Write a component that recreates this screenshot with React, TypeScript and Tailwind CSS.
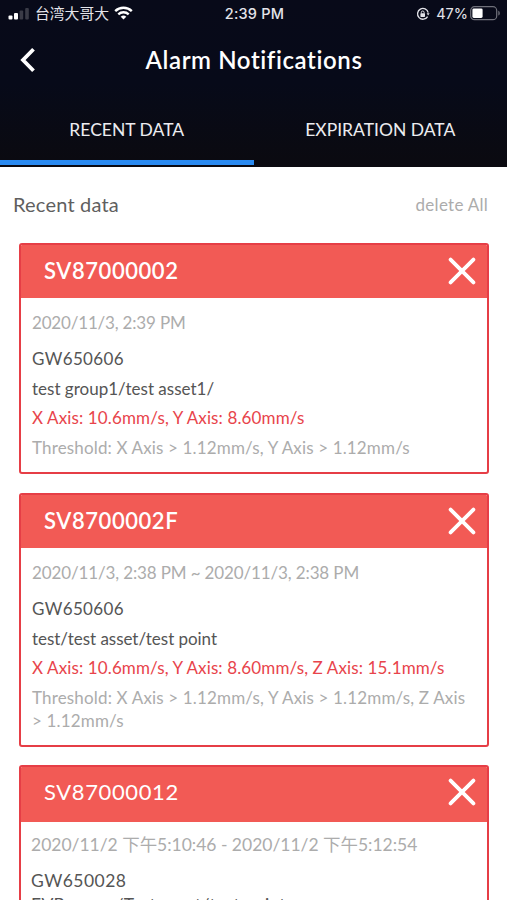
import { useState } from 'react';
import clsx from 'clsx';

interface AlarmLine {
  text: string;
  className: string;
}

interface Alarm {
  id: string;
  titleClass: string;
  headerClass: string;
  bodyClass: string;
  lines: AlarmLine[];
}

const alarms: Alarm[] = [
  {
    id: 'SV87000002',
    titleClass: 'font-semibold tracking-[0.56px]',
    headerClass: 'h-[53px] pb-[2px]',
    bodyClass: 'h-[174px] pt-[13px] pl-[11px] text-[17px]',
    lines: [
      { text: '2020/11/3, 2:39 PM', className: 'mb-[13px] text-[#acacac] tracking-[-0.18px]' },
      { text: 'GW650606', className: 'mb-[7px] text-[#555] tracking-[0.36px]' },
      { text: 'test group1/test asset1/', className: 'mb-[6px] text-[#555]' },
      { text: 'X Axis: 10.6mm/s, Y Axis: 8.60mm/s', className: 'mb-[7px] text-[#e8444b] tracking-[0.13px]' },
      { text: 'Threshold: X Axis > 1.12mm/s, Y Axis > 1.12mm/s', className: 'text-[#acacac] tracking-[0.15px]' },
    ],
  },
  {
    id: 'SV8700002F',
    titleClass: 'font-semibold tracking-[0.56px]',
    headerClass: 'h-[53px]',
    bodyClass: 'h-[197px] pt-[13px] pl-[11px] text-[17px]',
    lines: [
      { text: '2020/11/3, 2:38 PM ~ 2020/11/3, 2:38 PM', className: 'mb-[13px] text-[#acacac] tracking-[-0.13px]' },
      { text: 'GW650606', className: 'mb-[7px] text-[#555] tracking-[0.36px]' },
      { text: 'test/test asset/test point', className: 'mb-[6px] text-[#555] tracking-[-0.04px]' },
      {
        text: 'X Axis: 10.6mm/s, Y Axis: 8.60mm/s, Z Axis: 15.1mm/s',
        className: 'mb-[7px] text-[#e8444b] tracking-[0.12px]',
      },
      {
        text: 'Threshold: X Axis > 1.12mm/s, Y Axis > 1.12mm/s, Z Axis > 1.12mm/s',
        className: 'text-[#acacac] tracking-[0.16px]',
      },
    ],
  },
  {
    id: 'SV87000012',
    titleClass: 'font-normal tracking-[0.62px]',
    headerClass: 'h-[55px] pb-[5px]',
    bodyClass: 'h-[200px] pt-[11px] pl-[10px] text-[17.5px]',
    lines: [
      { text: '2020/11/2 下午5:10:46 - 2020/11/2 下午5:12:54', className: 'mb-[13px] text-[#acacac] tracking-[-0.02px]' },
      { text: 'GW650028', className: 'mb-px text-[#555] tracking-[0.45px]' },
      { text: 'EVB group/Test asset/test point', className: 'text-[#555] tracking-[0.27px]' },
    ],
  },
];

function StatusBar() {
  return (
    <div className="flex h-7 items-center justify-between pr-[6px] pl-[8px] font-['Inter','Noto_Sans_CJK_TC',sans-serif] text-[14.5px] leading-7 text-[#e4e4ea]">
      <div className="flex w-[200px] items-center">
        <svg width="22" height="14" viewBox="0 0 22 14" className="mr-[5px] shrink-0">
          <rect x="0.5" y="8.5" width="4" height="4" rx="1" fill="#fff" />
          <rect x="6" y="6" width="4" height="6.5" rx="1" fill="#fff" />
          <rect x="11.6" y="3.5" width="3.6" height="9" rx="1" fill="#3a3b47" />
          <rect x="17.2" y="1" width="3.6" height="11.5" rx="1" fill="#3a3b47" />
        </svg>
        <span className="text-[14.8px]">台湾大哥大</span>
        <svg width="19" height="14" viewBox="0 0 19 14" className="mb-[2px] ml-[5px] shrink-0" fill="none" stroke="#fff">
          <path d="M1.2 5.2a11.8 11.8 0 0 1 16.6 0" strokeWidth="2.4" />
          <path d="M4.3 8.4a7.4 7.4 0 0 1 10.4 0" strokeWidth="2.3" />
          <path d="M9.5 13.6 6.7 10.8a4 4 0 0 1 5.6 0z" fill="#fff" stroke="none" />
        </svg>
      </div>
      <span className="font-medium tracking-[0.2px]">2:39 PM</span>
      <div className="flex w-[200px] items-center justify-end">
        <svg width="14" height="14" viewBox="0 0 14 14" className="mr-[6px]" fill="none" stroke="#e4e4ea">
          <path d="M11.6 9.6A5.4 5.4 0 1 1 12.2 5.6" strokeWidth="1.3" />
          <path d="M10.6 6.2h3l-1.5 2.2z" fill="#e4e4ea" stroke="none" />
          <rect x="4.4" y="6.3" width="4.6" height="3.6" rx="0.6" fill="#e4e4ea" stroke="none" />
          <path d="M5.3 6.5V5.4a1.4 1.4 0 0 1 2.8 0v1.1" strokeWidth="1" />
        </svg>
        <span>47%</span>
        <svg width="31" height="15" viewBox="0 0 31 15" className="mb-px ml-[2px]">
          <rect x="0.7" y="0.7" width="26" height="13" rx="3.8" fill="none" stroke="#70717b" strokeWidth="1.2" />
          <rect x="2.4" y="2.4" width="10.2" height="9.6" rx="1.4" fill="#fff" />
          <path d="M28.3 4.8c2 .6 2 4.2 0 4.8z" fill="#70717b" />
        </svg>
      </div>
    </div>
  );
}

function AlarmCard({ alarm }: { alarm: Alarm }) {
  return (
    <article className="overflow-hidden rounded-[3px] border-2 border-[#e63e46] bg-white">
      <header className={clsx('flex items-center justify-between bg-[#f25a55] pr-[11.5px] pl-[23px] text-white', alarm.headerClass)}>
        <h2 className={clsx('text-[22px] leading-7', alarm.titleClass)}>{alarm.id}</h2>
        <button type="button" aria-label="Dismiss">
          <svg width="28" height="28" viewBox="0 0 28 28" stroke="#fff" strokeWidth="3.8" strokeLinecap="round">
            <path d="M2.6 2.6 25.4 25.4M25.4 2.6 2.6 25.4" />
          </svg>
        </button>
      </header>
      <div className={clsx('pr-[14px] leading-[23px]', alarm.bodyClass)}>
        {alarm.lines.map(line => (
          <p key={line.text} className={line.className}>
            {line.text}
          </p>
        ))}
      </div>
    </article>
  );
}

export default function App() {
  const [tab, setTab] = useState<'recent' | 'expiration'>('recent');

  return (
    <div className="h-[900px] w-[507px] overflow-hidden bg-white font-['Lato','Noto_Sans_CJK_TC',sans-serif]">
      <div className="h-[167px] bg-linear-to-b from-[#080a19] via-[#070a19] to-[#0b0a10] text-white">
        <StatusBar />
        <div className="grid h-[64px] grid-cols-[60px_1fr_60px] items-center">
          <button type="button" aria-label="Back" className="pl-[18px]">
            <svg width="18" height="26" viewBox="0 0 18 26" fill="none" stroke="#fff" strokeWidth="3.8">
              <path d="M15.5 2.2 5 13l10.5 10.8" />
            </svg>
          </button>
          <h1 className="pb-px pl-px text-center text-[24px] font-semibold tracking-[0.6px]">Alarm Notifications</h1>
        </div>
        <div className="flex h-[75px] text-[17.5px] text-[#ececf0]">
          <button
            type="button"
            onClick={() => setTab('recent')}
            className={clsx('h-[73px] w-1/2 border-b-[5px] pt-[9px]', tab === 'recent' ? 'border-[#2a8af0]' : 'border-transparent')}
          >
            RECENT DATA
          </button>
          <button
            type="button"
            onClick={() => setTab('expiration')}
            className={clsx('h-[73px] w-1/2 border-b-[5px] pt-[9px]', tab === 'expiration' ? 'border-[#2a8af0]' : 'border-transparent')}
          >
            EXPIRATION DATA
          </button>
        </div>
      </div>

      <div className="flex h-[76px] items-center justify-between pr-[19px] pl-[13px]">
        <span className="pb-[2px] text-[20px] tracking-[0.2px] text-[#5f5f5f]">Recent data</span>
        <button type="button" className="text-[17px] tracking-[0.27px] text-[#acacac]">
          delete All
        </button>
      </div>

      <div className="flex flex-col gap-[18.5px] pr-[18px] pl-[19px]">
        {alarms.map(alarm => (
          <AlarmCard key={alarm.id} alarm={alarm} />
        ))}
      </div>
    </div>
  );
}
